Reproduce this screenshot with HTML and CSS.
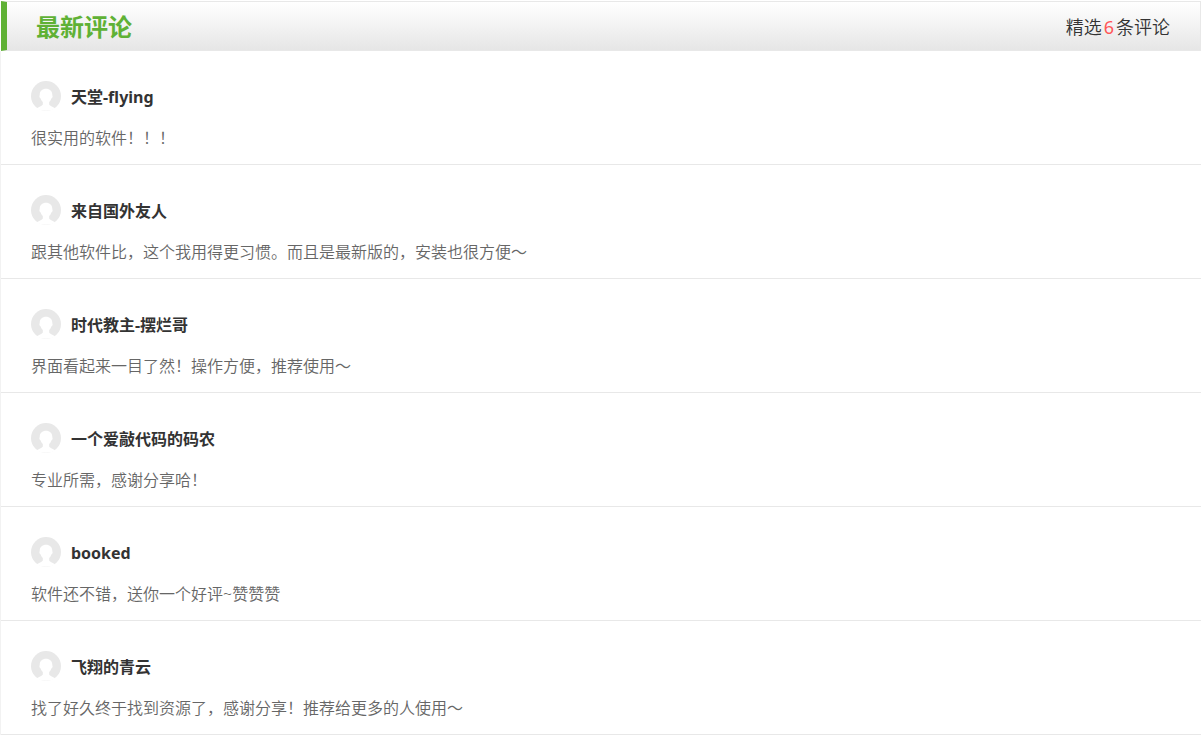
FILE: index.html
```html
<!DOCTYPE html>
<html lang="zh-CN">
<head>
  <meta charset="UTF-8">
  <title>最新评论</title>
  <link rel="stylesheet" href="styles.css">
</head>
<body>
<!-- 头像图形 -->
<svg class="sprite" aria-hidden="true">
  <symbol id="avatar" viewBox="0 0 30 30">
    <circle cx="15" cy="15" r="15" fill="#e8e8e8"/>
    <path fill="#fff" d="M15 7.8c-3.8 0-6.3 2.5-6.3 6 0 .8-.4 1-.3 1.8.1 1 .7 1.4 1.2 1.9.5 1.500 1.200 2.600 2.200 3.600v2.400c-.5 1.700-4.500 2.300-6.200 4C8.200 29.200 11.400 29.700 15 29.700s6.800-.5 9.400-2.200c-1.700-1.700-5.700-2.300-6.200-4v-2.400c1-1 1.700-2.100 2.200-3.600.5-.5 1.100-.9 1.200-1.900.1-.8-.3-1-.3-1.800 0-3.500-2.500-6-6.300-6z"/>
  </symbol>
</svg>

<section class="comments">
  <!-- 标题栏 -->
  <header class="comments-header">
    <h2>最新评论</h2>
    <p class="count">精选<span>6</span>条评论</p>
  </header>

  <!-- 评论列表 -->
  <ul class="comment-list">
    <li>
      <div class="user">
        <svg class="avatar"><use href="#avatar"/></svg>
        <strong>天堂-flying</strong>
      </div>
      <p>很实用的软件！！！</p>
    </li>
    <li>
      <div class="user">
        <svg class="avatar"><use href="#avatar"/></svg>
        <strong>来自国外友人</strong>
      </div>
      <p>跟其他软件比，这个我用得更习惯。而且是最新版的，安装也很方便～</p>
    </li>
    <li>
      <div class="user">
        <svg class="avatar"><use href="#avatar"/></svg>
        <strong>时代教主-摆烂哥</strong>
      </div>
      <p>界面看起来一目了然！操作方便，推荐使用～</p>
    </li>
    <li>
      <div class="user">
        <svg class="avatar"><use href="#avatar"/></svg>
        <strong>一个爱敲代码的码农</strong>
      </div>
      <p>专业所需，感谢分享哈！</p>
    </li>
    <li>
      <div class="user">
        <svg class="avatar"><use href="#avatar"/></svg>
        <strong>booked</strong>
      </div>
      <p>软件还不错，送你一个好评~赞赞赞</p>
    </li>
    <li>
      <div class="user">
        <svg class="avatar"><use href="#avatar"/></svg>
        <strong>飞翔的青云</strong>
      </div>
      <p>找了好久终于找到资源了，感谢分享！推荐给更多的人使用～</p>
    </li>
  </ul>
</section>
</body>
</html>
```
FILE: styles.css
```css
* {
  box-sizing: border-box;
  margin: 0;
  padding: 0;
}
body {
  padding-top: 1px;
  background-color: #fff;
  font-family: "Noto Sans", "Noto Sans CJK SC", sans-serif;
  font-size: 16px;
  line-height: 24px;
  color: #333;
}
.sprite {
  display: none;
}
.comments-header {
  display: flex;
  justify-content: space-between;
  align-items: center;
  height: 50px;
  margin-left: 1px;
  padding: 2px 30px 0 29px;
  border: 1px solid #e8e8e8;
  border-left: 6px solid #5fb135;
  background: linear-gradient(#fff, #e6e6e6);
}
.comments-header h2 {
  font-size: 24px;
  line-height: 36px;
  color: #5fb135;
}
.count {
  font-size: 18px;
  font-weight: 350;
}
.count span {
  margin: 0 2px;
  font-weight: 400;
  color: #ff5757;
}
.comment-list {
  list-style: none;
  border-left: 1px solid #f2f2f2;
}
.comment-list li {
  padding: 30px 30px 14px;
  border-bottom: 1px solid #e8e8e8;
}
.user {
  display: flex;
  align-items: center;
  gap: 10px;
  margin-bottom: 15px;
}
.user strong {
  padding-top: 2px;
}
.avatar {
  width: 30px;
  height: 30px;
}
.comment-list p {
  font-weight: 350;
  color: #666;
}
```
